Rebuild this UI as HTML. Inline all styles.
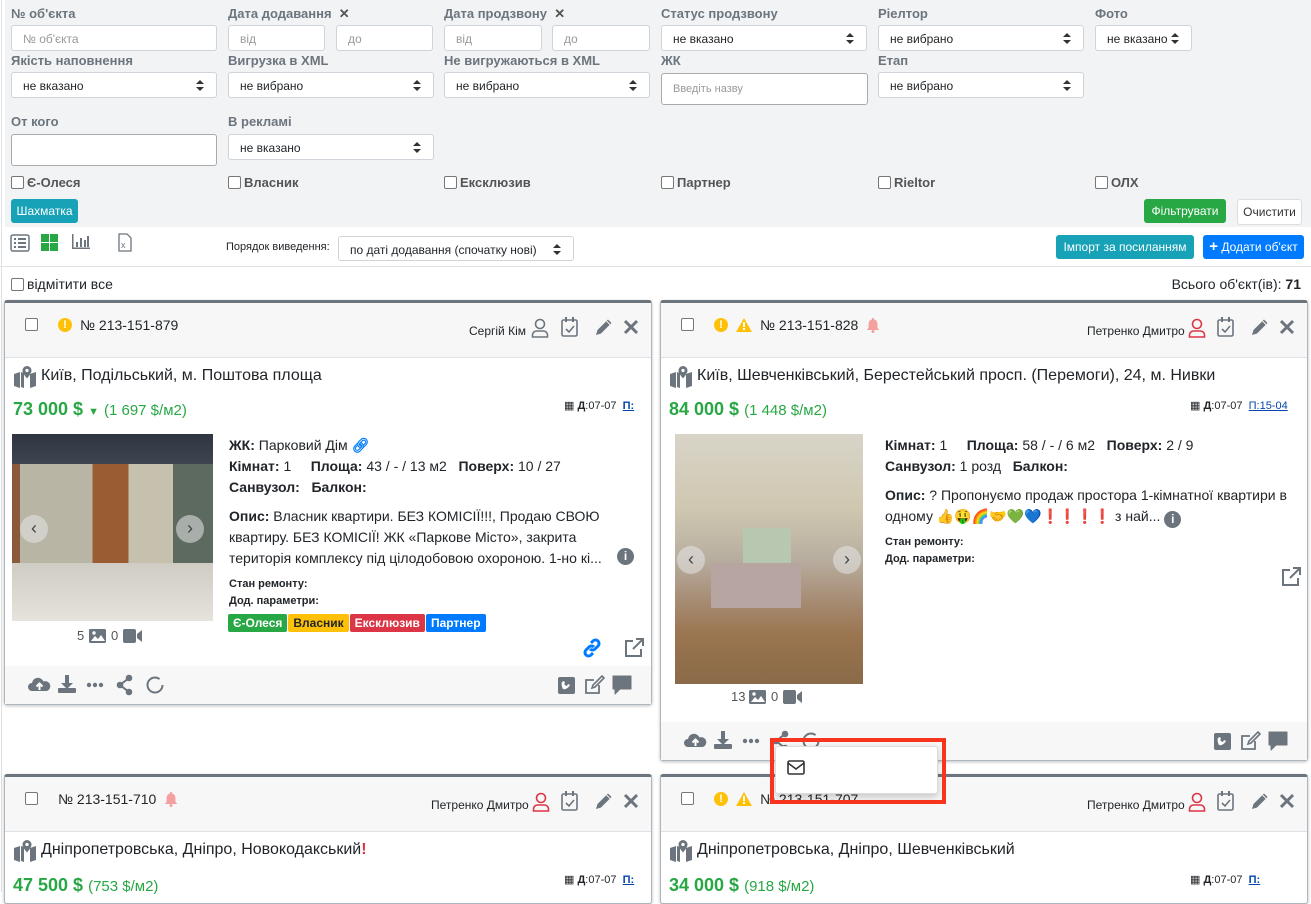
<!DOCTYPE html>
<html><head><meta charset="utf-8">
<style>
*{box-sizing:border-box;margin:0;padding:0}
body{width:1311px;height:892px;overflow:hidden;background:#fff;font-family:"Liberation Sans",Arial,sans-serif;color:#212529;position:relative}
.a{position:absolute}
.filt{position:absolute;left:5px;top:0;width:1306px;height:227px;background:#f1f3f5}
.lbl{position:absolute;font-size:13px;font-weight:bold;color:#6c757d}
.inp{position:absolute;background:#fff;border:1px solid #ced4da;border-radius:3px;height:26px;font-size:12px;color:#999;padding:6px 11px}
.sel{position:absolute;background:#fff;border:1px solid #ced4da;border-radius:3px;height:26px;font-size:12px;color:#212529;padding:6px 11px}
.sel:after{content:"";position:absolute;right:12px;top:7px;border:4px solid transparent;border-bottom:4px solid #333;border-top:0;}
.sel:before{content:"";position:absolute;right:12px;top:14px;border:4px solid transparent;border-top:4px solid #333;border-bottom:0;}
.cb{position:absolute;font-size:13px;font-weight:bold;color:#555}
.cb i{display:inline-block;width:13px;height:13px;border:1px solid #777;border-radius:2px;background:#fff;vertical-align:-2px;margin-right:3px}
.btn{position:absolute;color:#fff;font-size:12px;border-radius:3px;text-align:center;line-height:24px}
.card{position:absolute;background:#fff;border:1px solid #adb5bd;border-top:3px solid #6c757d;border-radius:3px;box-shadow:0 1px 3px rgba(0,0,0,.25)}
.hd{position:absolute;left:0;right:0;top:0;height:55px;background:#f7f7f7;border-bottom:1px solid #dee2e6}
.ft{position:absolute;left:0;right:0;bottom:0;height:38px;background:#f7f7f7}
.t14{font-size:14px}
.g{color:#28a745}
.tag{display:inline-block;color:#fff;font-size:12px;font-weight:bold;padding:2px 5px;border-radius:2px;margin-right:1px}
.nav{position:absolute;width:28px;height:28px;border-radius:50%;background:rgba(230,230,230,.55);color:#444;font-size:18px;text-align:center;line-height:26px}
</style></head><body>
<svg width="0" height="0" style="position:absolute">
 <defs>
  <g id="fl">
   <path d="M4 17a4 4 0 0 1 0-8 6 6 0 0 1 11.5-1.5A4.5 4.5 0 0 1 19 17z" fill="#6c757d"/><path d="M11.5 16v-6M8.5 12.5l3-3 3 3" stroke="#fff" stroke-width="2" fill="none"/>
   <g transform="translate(30,0)" fill="#6c757d"><rect x="7" y="1" width="4" height="9"/><path d="M3 9h12l-6 6z"/><rect x="0" y="14" width="18" height="5" rx="1"/></g>
   <g transform="translate(58,0)" fill="#6c757d"><circle cx="3" cy="11" r="2.2"/><circle cx="9" cy="11" r="2.2"/><circle cx="15" cy="11" r="2.2"/></g>
   <g transform="translate(88,0)" fill="#6c757d"><circle cx="13" cy="4" r="3.3"/><circle cx="4" cy="11" r="3.3"/><circle cx="13" cy="18" r="3.3"/><path d="M13 4L4 11l9 7" stroke="#6c757d" stroke-width="2" fill="none"/></g>
   <g transform="translate(118,0)"><circle cx="9" cy="11" r="7.5" fill="none" stroke="#6c757d" stroke-width="2" stroke-dasharray="40 7"/></g>
  </g>
  <g id="fr">
   <rect x="0" y="2" width="17" height="17" rx="2" fill="#6c757d"/><path d="M5 14c3 1 6-2 7-4l-2-1-1 2c-1 0-2-1-3-2l1-1-1-2-2 1c-1 2 0 5 1 7z" fill="#fff"/>
   <g transform="translate(27,0)"><path d="M14 10v8H1V5h8" fill="none" stroke="#6c757d" stroke-width="1.8"/><path d="M17 1l2 2-9 9-3 1 1-3z" fill="none" stroke="#6c757d" stroke-width="1.6"/></g>
   <g transform="translate(54,0)"><path d="M1 1h18v13H8l-5 5v-5H1z" fill="#6c757d" stroke="#6c757d" stroke-linejoin="round" stroke-width="1"/></g>
  </g>
  <g id="tri"><path d="M8 1l8 14H0z" fill="#ffc107"/><rect x="7" y="5" width="2" height="5" fill="#fff"/><rect x="7" y="11" width="2" height="2" fill="#fff"/></g>
  <g id="bell"><path d="M7 1a1 1 0 0 1 1 1.5c2.5.5 3.5 2.5 3.5 5V11l1.5 1.5V13H1v-.5L2.5 11V7.5c0-2.5 1-4.5 3.5-5A1 1 0 0 1 7 1z" fill="#f4a0a0"/><circle cx="7" cy="14.5" r="1.5" fill="#f4a0a0"/></g>
  <g id="usr"><circle cx="9" cy="6" r="4.5" fill="none" stroke-width="1.6"/><path d="M1.5 19v-2a4 4 0 0 1 4-4h7a4 4 0 0 1 4 4v2z" fill="none" stroke-width="1.6"/></g>
  <g id="cal"><rect x="1" y="3" width="15" height="16" rx="1.5" fill="none" stroke="#6c757d" stroke-width="1.6"/><rect x="4" y="0" width="2" height="5" fill="#6c757d"/><rect x="11" y="0" width="2" height="5" fill="#6c757d"/><path d="M5 12l3 3 5-6" fill="none" stroke="#6c757d" stroke-width="1.6"/></g>
  <g id="pen"><path d="M2 18l1.5-5L14 2.5l3.5 3.5L7 16.5z" fill="#6c757d"/><path d="M12.5 4l3.5 3.5" stroke="#f7f7f7" stroke-width="1"/></g>
  <g id="x"><path d="M2 2l12 12M14 2L2 14" stroke="#6c757d" stroke-width="3"/></g>
  <g id="map"><path d="M1 8l6-2v16l-6-2zM8 6l3 1v15l-3-1zM17 8l6-2v14l-6 2z" fill="#6c757d"/><path d="M14 0a4.5 4.5 0 0 1 4.5 4.5c0 3-4.5 8-4.5 8s-4.5-5-4.5-8A4.5 4.5 0 0 1 14 0z" fill="#6c757d"/><circle cx="14" cy="4.5" r="1.6" fill="#fff"/></g>
  <g id="ext"><path d="M9 3H2v15h15v-7" fill="none" stroke="#6c757d" stroke-width="2"/><path d="M12 1h7v7M19 1l-10 10" fill="none" stroke="#6c757d" stroke-width="2"/></g>
  <g id="media"><rect x="0" y="1" width="17" height="14" rx="1.5" fill="#6c757d"/><path d="M2 13l4-5 3 3 3-4 4 6z" fill="#fff"/><circle cx="5" cy="5" r="1.7" fill="#fff"/>
   <g transform="translate(34,0)" fill="#6c757d"><rect x="0" y="1" width="13" height="14" rx="2"/><path d="M14 6l5-4v12l-5-4z"/></g></g>
 </defs>
</svg>
<div class="a" style="left:1px;top:0;width:1px;height:892px;background:#dee2e6"></div>
<div class="filt"></div>
<div class="lbl" style="left:11px;top:6px">№ об'єкта</div>
<div class="inp" style="left:11px;top:25px;width:206px">№ об'єкта</div>
<div class="lbl" style="left:228px;top:6px">Дата додавання &nbsp;<span style="color:#555">✕</span></div>
<div class="inp" style="left:228px;top:25px;width:97px">від</div>
<div class="inp" style="left:336px;top:25px;width:97px">до</div>
<div class="lbl" style="left:444px;top:6px">Дата продзвону &nbsp;<span style="color:#555">✕</span></div>
<div class="inp" style="left:444px;top:25px;width:98px">від</div>
<div class="inp" style="left:552px;top:25px;width:98px">до</div>
<div class="lbl" style="left:661px;top:6px">Статус продзвону</div>
<div class="sel" style="left:661px;top:25px;width:206px">не вказано</div>
<div class="lbl" style="left:878px;top:6px">Ріелтор</div>
<div class="sel" style="left:878px;top:25px;width:206px">не вибрано</div>
<div class="lbl" style="left:1095px;top:6px">Фото</div>
<div class="sel" style="left:1095px;top:25px;width:97px;overflow:hidden;white-space:nowrap;padding-right:26px">не вказано</div>
<div class="lbl" style="left:11px;top:53px">Якість наповнення</div>
<div class="sel" style="left:11px;top:72px;width:206px">не вказано</div>
<div class="lbl" style="left:228px;top:53px">Вигрузка в XML</div>
<div class="sel" style="left:228px;top:72px;width:206px">не вибрано</div>
<div class="lbl" style="left:444px;top:53px">Не вигружаються в XML</div>
<div class="sel" style="left:444px;top:72px;width:206px">не вибрано</div>
<div class="lbl" style="left:661px;top:53px">ЖК</div>
<div class="inp" style="left:661px;top:73px;width:207px;height:32px;padding:9px 11px;font-size:11px;border-color:#aaa">Введіть назву</div>
<div class="lbl" style="left:878px;top:53px">Етап</div>
<div class="sel" style="left:878px;top:72px;width:206px">не вибрано</div>
<div class="lbl" style="left:11px;top:114px">От кого</div>
<div class="inp" style="left:11px;top:134px;width:206px;height:32px;border-color:#aaa"></div>
<div class="lbl" style="left:228px;top:114px">В рекламі</div>
<div class="sel" style="left:228px;top:134px;width:206px">не вказано</div>
<div class="cb" style="left:11px;top:175px"><i></i>Є-Олеся</div>
<div class="cb" style="left:228px;top:175px"><i></i>Власник</div>
<div class="cb" style="left:444px;top:175px"><i></i>Ексклюзив</div>
<div class="cb" style="left:661px;top:175px"><i></i>Партнер</div>
<div class="cb" style="left:878px;top:175px"><i></i>Rieltor</div>
<div class="cb" style="left:1095px;top:175px"><i></i>ОЛХ</div>
<div class="btn" style="left:11px;top:199px;width:67px;background:#17a2b8">Шахматка</div>
<div class="btn" style="left:1144px;top:199px;width:82px;background:#28a745">Фільтрувати</div>
<div class="btn" style="left:1237px;top:199px;width:65px;background:#fff;color:#333;border:1px solid #ddd">Очистити</div>
<svg class="a" style="left:10px;top:234px" width="20" height="18" viewBox="0 0 20 18"><rect x="1" y="1" width="18" height="16" rx="2" fill="none" stroke="#6c757d" stroke-width="1.5"/><g fill="#6c757d"><rect x="4" y="4" width="2" height="2"/><rect x="8" y="4" width="8" height="2"/><rect x="4" y="8" width="2" height="2"/><rect x="8" y="8" width="8" height="2"/><rect x="4" y="12" width="2" height="2"/><rect x="8" y="12" width="8" height="2"/></g></svg>
<svg class="a" style="left:41px;top:234px" width="18" height="17"><g fill="#28a745"><rect x="0" y="0" width="8" height="8"/><rect x="9" y="0" width="8" height="8"/><rect x="0" y="9" width="8" height="8"/><rect x="9" y="9" width="8" height="8"/></g></svg>
<svg class="a" style="left:72px;top:234px" width="18" height="16"><g fill="#6c757d"><rect x="0" y="0" width="1.5" height="15"/><rect x="0" y="13.5" width="18" height="1.5"/><rect x="4" y="8" width="2" height="5"/><rect x="8" y="4" width="2" height="9"/><rect x="12" y="6" width="2" height="7"/><rect x="15" y="2" width="2" height="11"/></g></svg>
<svg class="a" style="left:118px;top:233px" width="14" height="19"><path d="M1 1h8l4 4v13H1z" fill="none" stroke="#6c757d" stroke-width="1.3"/><text x="3" y="15" font-size="9" fill="#6c757d" font-family="Liberation Sans">x</text></svg>
<div class="a" style="left:226px;top:241px;font-size:11px">Порядок виведення:</div>
<div class="sel" style="left:338px;top:236px;width:236px;height:25px">по даті додавання (спочатку нові)</div>
<div class="btn" style="left:1056px;top:235px;width:138px;background:#17a2b8">Імпорт за посиланням</div>
<div class="btn" style="left:1203px;top:235px;width:101px;background:#007bff"><b style="font-size:15px">+</b> Додати об'єкт</div>
<div class="a" style="left:0;top:266px;width:1311px;height:1px;background:#dee2e6"></div>
<div class="cb" style="left:11px;top:276px;font-weight:normal;color:#212529;font-size:14px"><i></i>відмітити все</div>
<div class="a" style="right:10px;top:276px;font-size:14px">Всього об'єкт(ів): <b>71</b></div>

<!-- CARD 1 -->
<div class="card" style="left:4px;top:300px;width:648px;height:405px">
 <div class="hd"></div>
 <div class="cb" style="left:20px;top:14px"><i></i></div>
 <div class="a" style="left:53px;top:15px;width:14px;height:14px;border-radius:50%;background:#ffc107;color:#fff;font-size:11px;font-weight:bold;text-align:center;line-height:14px">!</div>
 <div class="a t14" style="left:75px;top:14px">№ 213-151-879</div>
 <div class="a" style="left:464px;top:21px;font-size:12px">Сергій Кім</div>
 <svg class="a" style="left:526px;top:15px" width="18" height="20"><use href="#usr" stroke="#6c757d"/></svg>
 <svg class="a" style="left:556px;top:14px" width="17" height="20"><use href="#cal"/></svg>
 <svg class="a" style="left:589px;top:14px" width="20" height="20"><use href="#pen"/></svg>
 <svg class="a" style="left:618px;top:16px" width="16" height="16"><use href="#x"/></svg>
 <svg class="a" style="left:8px;top:63px" width="24" height="22"><use href="#map"/></svg>
 <div class="a" style="left:36px;top:64px;font-size:16px">Київ, Подільський, м. Поштова площа</div>
 <div class="a g" style="left:8px;top:96px;font-size:18px;font-weight:bold">73 000 $ <span style="font-size:11px">▼</span> <span style="font-weight:normal;font-size:15px">(1 697 $/м2)</span></div>
 <div class="a" style="left:559px;top:96px;font-size:11px">▦ <b>Д</b>:07-07 &nbsp;<u style="color:#0645ad;font-weight:bold">П:</u></div>
 <div class="a" style="left:7px;top:131px;width:201px;height:187px;background:linear-gradient(90deg,#8a5a3a 0 4%,#b9b5a5 4% 40%,#9a5c33 40% 58%,#c6c1ae 58% 80%,#5d6a60 80%);"></div>
 <div class="a" style="left:7px;top:131px;width:201px;height:30px;background:linear-gradient(180deg,#2e3440,#3e4450)"></div>
 <div class="a" style="left:7px;top:260px;width:201px;height:58px;background:linear-gradient(180deg,#cfccc4,#e6e3dc)"></div>
 <div class="nav" style="left:15px;top:212px">‹</div>
 <div class="nav" style="left:171px;top:212px">›</div>
 <div class="a" style="left:72px;top:325px;font-size:13px;color:#555">5</div>
 <svg class="a" style="left:84px;top:325px" width="54" height="16"><use href="#media"/></svg>
 <div class="a" style="left:106px;top:325px;font-size:13px;color:#555">0</div>
 <div class="a t14" style="left:224px;top:132px;line-height:21px">
  <b>ЖК:</b> Парковий Дім <span style="color:#007bff;font-weight:bold">&#x1F517;&#xFE0E;</span><br>
  <b>Кімнат:</b> 1 &nbsp;&nbsp;&nbsp; <b>Площа:</b> 43 / - / 13 м2 &nbsp; <b>Поверх:</b> 10 / 27<br>
  <b>Санвузол:</b> &nbsp; <b>Балкон:</b>
 </div>
 <div class="a t14" style="left:224px;top:203px;width:390px;line-height:21px"><b>Опис:</b> Власник квартири. БЕЗ КОМІСІЇ!!!, Продаю СВОЮ квартиру. БЕЗ КОМІСІЇ! ЖК «Паркове Місто», закрита територія комплексу під цілодобовою охороною. 1-но кі...</div>
 <div class="a" style="left:612px;top:245px;width:17px;height:17px;border-radius:50%;background:#6c757d;color:#fff;font-size:12px;font-weight:bold;text-align:center;line-height:17px">i</div>
 <div class="a" style="left:224px;top:273px;font-size:11px;font-weight:bold;line-height:17px">Стан ремонту:<br>Дод. параметри:</div>
 <div class="a" style="left:223px;top:311px"><span class="tag" style="background:#28a745">Є-Олеся</span><span class="tag" style="background:#ffc107;color:#212529">Власник</span><span class="tag" style="background:#dc3545">Ексклюзив</span><span class="tag" style="background:#007bff">Партнер</span></div>
 <svg class="a" style="left:577px;top:335px" width="20" height="20"><g fill="none" stroke="#007bff" stroke-width="3"><path d="M9 5l2-2a3.5 3.5 0 0 1 5 5l-3 3a3.5 3.5 0 0 1-5 0"/><path d="M11 15l-2 2a3.5 3.5 0 0 1-5-5l3-3a3.5 3.5 0 0 1 5 0"/></g></svg>
 <svg class="a" style="left:619px;top:335px" width="20" height="20"><use href="#ext"/></svg>
 <div class="ft"></div>
 <svg class="a" style="left:23px;top:371px" width="140" height="22"><use href="#fl"/></svg>
 <svg class="a" style="left:553px;top:372px" width="80" height="22"><use href="#fr"/></svg>
</div>

<!-- CARD 2 -->
<div class="card" style="left:660px;top:300px;width:648px;height:461px">
 <div class="hd"></div>
 <div class="cb" style="left:20px;top:14px"><i></i></div>
 <div class="a" style="left:53px;top:15px;width:14px;height:14px;border-radius:50%;background:#ffc107;color:#fff;font-size:11px;font-weight:bold;text-align:center;line-height:14px">!</div>
 <svg class="a" style="left:75px;top:14px" width="16" height="16"><use href="#tri"/></svg>
 <div class="a t14" style="left:99px;top:14px">№ 213-151-828</div>
 <svg class="a" style="left:205px;top:14px" width="14" height="17"><use href="#bell"/></svg>
 <div class="a" style="left:426px;top:21px;font-size:12px">Петренко Дмитро</div>
 <svg class="a" style="left:527px;top:15px" width="18" height="20"><use href="#usr" stroke="#dc3545"/></svg>
 <svg class="a" style="left:556px;top:14px" width="17" height="20"><use href="#cal"/></svg>
 <svg class="a" style="left:589px;top:14px" width="20" height="20"><use href="#pen"/></svg>
 <svg class="a" style="left:618px;top:16px" width="16" height="16"><use href="#x"/></svg>
 <svg class="a" style="left:8px;top:63px" width="24" height="22"><use href="#map"/></svg>
 <div class="a" style="left:36px;top:64px;font-size:16px">Київ, Шевченківський, Берестейський просп. (Перемоги), 24, м. Нивки</div>
 <div class="a g" style="left:8px;top:96px;font-size:18px;font-weight:bold">84 000 $ <span style="font-weight:normal;font-size:15px">(1 448 $/м2)</span></div>
 <div class="a" style="left:529px;top:96px;font-size:11px">▦ <b>Д</b>:07-07 &nbsp;<u style="color:#0645ad">П:15-04</u></div>
 <div class="a" style="left:14px;top:131px;width:188px;height:250px;background:linear-gradient(180deg,#d8d4c8 0%,#cfc7b0 30%,#b8aea0 50%,#a88f78 65%,#9a7550 80%,#8a6a48 100%)"></div>
 <div class="a" style="left:82px;top:225px;width:48px;height:40px;background:#b8c8b0"></div>
 <div class="a" style="left:50px;top:260px;width:90px;height:45px;background:#b7a5a2"></div>
 <div class="nav" style="left:16px;top:243px">‹</div>
 <div class="nav" style="left:172px;top:243px">›</div>
 <div class="a" style="left:70px;top:386px;font-size:13px;color:#555">13</div>
 <svg class="a" style="left:88px;top:386px" width="54" height="16"><use href="#media"/></svg>
 <div class="a" style="left:110px;top:386px;font-size:13px;color:#555">0</div>
 <div class="a t14" style="left:224px;top:132px;line-height:21px">
  <b>Кімнат:</b> 1 &nbsp;&nbsp;&nbsp; <b>Площа:</b> 58 / - / 6 м2 &nbsp; <b>Поверх:</b> 2 / 9<br>
  <b>Санвузол:</b> 1 розд &nbsp; <b>Балкон:</b>
 </div>
 <div class="a t14" style="left:224px;top:182px;width:410px;line-height:21px"><b>Опис:</b> ? Пропонуємо продаж простора 1-кімнатної квартири в одному 👍🤑🌈🤝💚💙<span style="color:#dc3545;font-weight:bold">❗❗❗❗</span> з най... <span style="display:inline-block;width:17px;height:17px;border-radius:50%;background:#6c757d;color:#fff;font-size:12px;font-weight:bold;text-align:center;line-height:17px;vertical-align:-2px">i</span></div>
 <div class="a" style="left:224px;top:231px;font-size:11px;font-weight:bold;line-height:17px">Стан ремонту:<br>Дод. параметри:</div>
 <svg class="a" style="left:620px;top:264px" width="20" height="20"><use href="#ext"/></svg>
 <div class="ft"></div>
 <svg class="a" style="left:23px;top:427px" width="140" height="22"><use href="#fl"/></svg>
 <svg class="a" style="left:553px;top:428px" width="80" height="22"><use href="#fr"/></svg>
</div>

<!-- CARD 3 -->
<div class="card" style="left:4px;top:774px;width:648px;height:130px">
 <div class="hd"></div>
 <div class="cb" style="left:20px;top:14px"><i></i></div>
 <div class="a t14" style="left:53px;top:14px">№ 213-151-710</div>
 <svg class="a" style="left:159px;top:14px" width="14" height="17"><use href="#bell"/></svg>
 <div class="a" style="left:426px;top:21px;font-size:12px">Петренко Дмитро</div>
 <svg class="a" style="left:527px;top:15px" width="18" height="20"><use href="#usr" stroke="#dc3545"/></svg>
 <svg class="a" style="left:556px;top:14px" width="17" height="20"><use href="#cal"/></svg>
 <svg class="a" style="left:589px;top:14px" width="20" height="20"><use href="#pen"/></svg>
 <svg class="a" style="left:618px;top:16px" width="16" height="16"><use href="#x"/></svg>
 <svg class="a" style="left:8px;top:63px" width="24" height="22"><use href="#map"/></svg>
 <div class="a" style="left:36px;top:64px;font-size:16px">Дніпропетровська, Дніпро, Новокодакський<span style="color:#dc3545;font-weight:bold">!</span></div>
 <div class="a g" style="left:8px;top:98px;font-size:18px;font-weight:bold">47 500 $ <span style="font-weight:normal;font-size:15px">(753 $/м2)</span></div>
 <div class="a" style="left:559px;top:96px;font-size:11px">▦ <b>Д</b>:07-07 &nbsp;<u style="color:#0645ad;font-weight:bold">П:</u></div>
</div>

<!-- CARD 4 -->
<div class="card" style="left:660px;top:774px;width:648px;height:130px">
 <div class="hd"></div>
 <div class="cb" style="left:20px;top:14px"><i></i></div>
 <div class="a" style="left:53px;top:15px;width:14px;height:14px;border-radius:50%;background:#ffc107;color:#fff;font-size:11px;font-weight:bold;text-align:center;line-height:14px">!</div>
 <svg class="a" style="left:75px;top:14px" width="16" height="16"><use href="#tri"/></svg>
 <div class="a t14" style="left:99px;top:14px">№ 213-151-707</div>
 <div class="a" style="left:426px;top:21px;font-size:12px">Петренко Дмитро</div>
 <svg class="a" style="left:527px;top:15px" width="18" height="20"><use href="#usr" stroke="#dc3545"/></svg>
 <svg class="a" style="left:556px;top:14px" width="17" height="20"><use href="#cal"/></svg>
 <svg class="a" style="left:589px;top:14px" width="20" height="20"><use href="#pen"/></svg>
 <svg class="a" style="left:618px;top:16px" width="16" height="16"><use href="#x"/></svg>
 <svg class="a" style="left:8px;top:63px" width="24" height="22"><use href="#map"/></svg>
 <div class="a" style="left:36px;top:64px;font-size:16px">Дніпропетровська, Дніпро, Шевченківський</div>
 <div class="a g" style="left:8px;top:98px;font-size:18px;font-weight:bold">34 000 $ <span style="font-weight:normal;font-size:15px">(918 $/м2)</span></div>
 <div class="a" style="left:529px;top:96px;font-size:11px">▦ <b>Д</b>:07-07 &nbsp;<u style="color:#0645ad;font-weight:bold">П:</u></div>
</div>

<!-- popup -->
<div class="a" style="left:775px;top:746px;width:163px;height:48px;background:#fff;border:1px solid #ddd;border-radius:3px;box-shadow:0 3px 8px rgba(0,0,0,.2)"></div>
<svg class="a" style="left:787px;top:760px" width="18" height="15"><rect x="1" y="1" width="16" height="13" rx="1.5" fill="none" stroke="#333" stroke-width="1.6"/><path d="M1 3l8 6 8-6" fill="none" stroke="#333" stroke-width="1.6"/></svg>
<div class="a" style="left:770px;top:738px;width:176px;height:66px;border:4px solid #f8341f"></div>
</body></html>
